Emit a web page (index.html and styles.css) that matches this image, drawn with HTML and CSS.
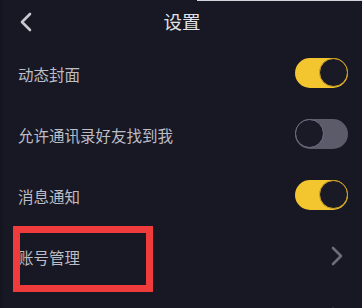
FILE: index.html
```html
<!DOCTYPE html>
<html lang="zh">
<head>
<meta charset="utf-8">
<link rel="stylesheet" href="styles.css">
</head>
<body>
<div class="screen">
  <div class="topline"></div>
  <header class="header">
    <span class="back">
      <svg width="14" height="20" viewBox="0 0 14 20"><path d="M11 2 L3 10 L11 18" fill="none" stroke="#c8c8d0" stroke-width="2.6" stroke-linecap="round" stroke-linejoin="round"/></svg>
    </span>
    <h1 class="title">设置</h1>
  </header>
  <div class="row">
    <span class="label">动态封面</span>
    <span class="toggle on"><span class="knob"></span></span>
  </div>
  <div class="row">
    <span class="label">允许通讯录好友找到我</span>
    <span class="toggle off"><span class="knob"></span></span>
  </div>
  <div class="row">
    <span class="label">消息通知</span>
    <span class="toggle on"><span class="knob"></span></span>
  </div>
  <div class="row row-link">
    <span class="label">账号管理</span>
    <span class="chev">
      <svg width="12" height="20" viewBox="0 0 12 20"><path d="M2 2 L10 10 L2 18" fill="none" stroke="#6c6c78" stroke-width="2.6" stroke-linecap="round" stroke-linejoin="round"/></svg>
    </span>
    <span class="highlight"></span>
  </div>
  <div class="row">
    <span class="label"></span>
    <span class="chev">
      <svg width="12" height="20" viewBox="0 0 12 20"><path d="M2 2 L10 10 L2 18" fill="none" stroke="#6c6c78" stroke-width="2.6" stroke-linecap="round" stroke-linejoin="round"/></svg>
    </span>
  </div>
</div>
</body>
</html>
```
FILE: styles.css
```css
html, body {
  margin: 0;
  padding: 0;
  background: #181824;
  overflow: hidden;
}
.screen {
  position: relative;
  width: 362px;
  height: 308px;
  overflow: hidden;
  background: #181824;
  box-shadow: inset 3px 0 0 #14141e;
  font-family: "Noto Sans CJK SC", "Noto Sans", sans-serif;
}
.topline {
  position: absolute;
  left: 197px;
  right: 0;
  top: 0;
  height: 1px;
  background: #d4d4da;
}
.header {
  height: 42px;
  display: flex;
  align-items: center;
  justify-content: center;
  position: relative;
}
.back {
  position: absolute;
  left: 19px;
  top: 12px;
  display: flex;
}
.title {
  margin: 0;
  font-size: 18.5px;
  font-weight: 400;
  color: #e2e2e6;
  line-height: 1;
  padding-left: 2px;
}
.row {
  position: relative;
  height: 61px;
  display: flex;
  align-items: center;
  justify-content: space-between;
  padding: 0 14px 0 18px;
}
.label {
  font-size: 15.5px;
  color: #bdbdc4;
  line-height: 1;
  margin-top: 4px;
}
.toggle {
  position: relative;
  width: 53px;
  height: 30px;
  border-radius: 15px;
  display: flex;
  align-items: center;
}
.toggle.on {
  background: #f3c52e;
  justify-content: flex-end;
}
.toggle.off {
  background: #5b5b69;
  justify-content: flex-start;
}
.knob {
  width: 27px;
  height: 27px;
  border-radius: 50%;
  background: #1a1a26;
}
.toggle.on .knob {
  border: 1.5px solid #d8a824;
}
.toggle.off .knob {
  border: 1.5px solid #74748a;
}
.chev {
  display: flex;
  margin-right: 5px;
}
.highlight {
  position: absolute;
  left: 13px;
  top: 1px;
  width: 126px;
  height: 52px;
  border: 7px solid #ef3b3b;
}
```
